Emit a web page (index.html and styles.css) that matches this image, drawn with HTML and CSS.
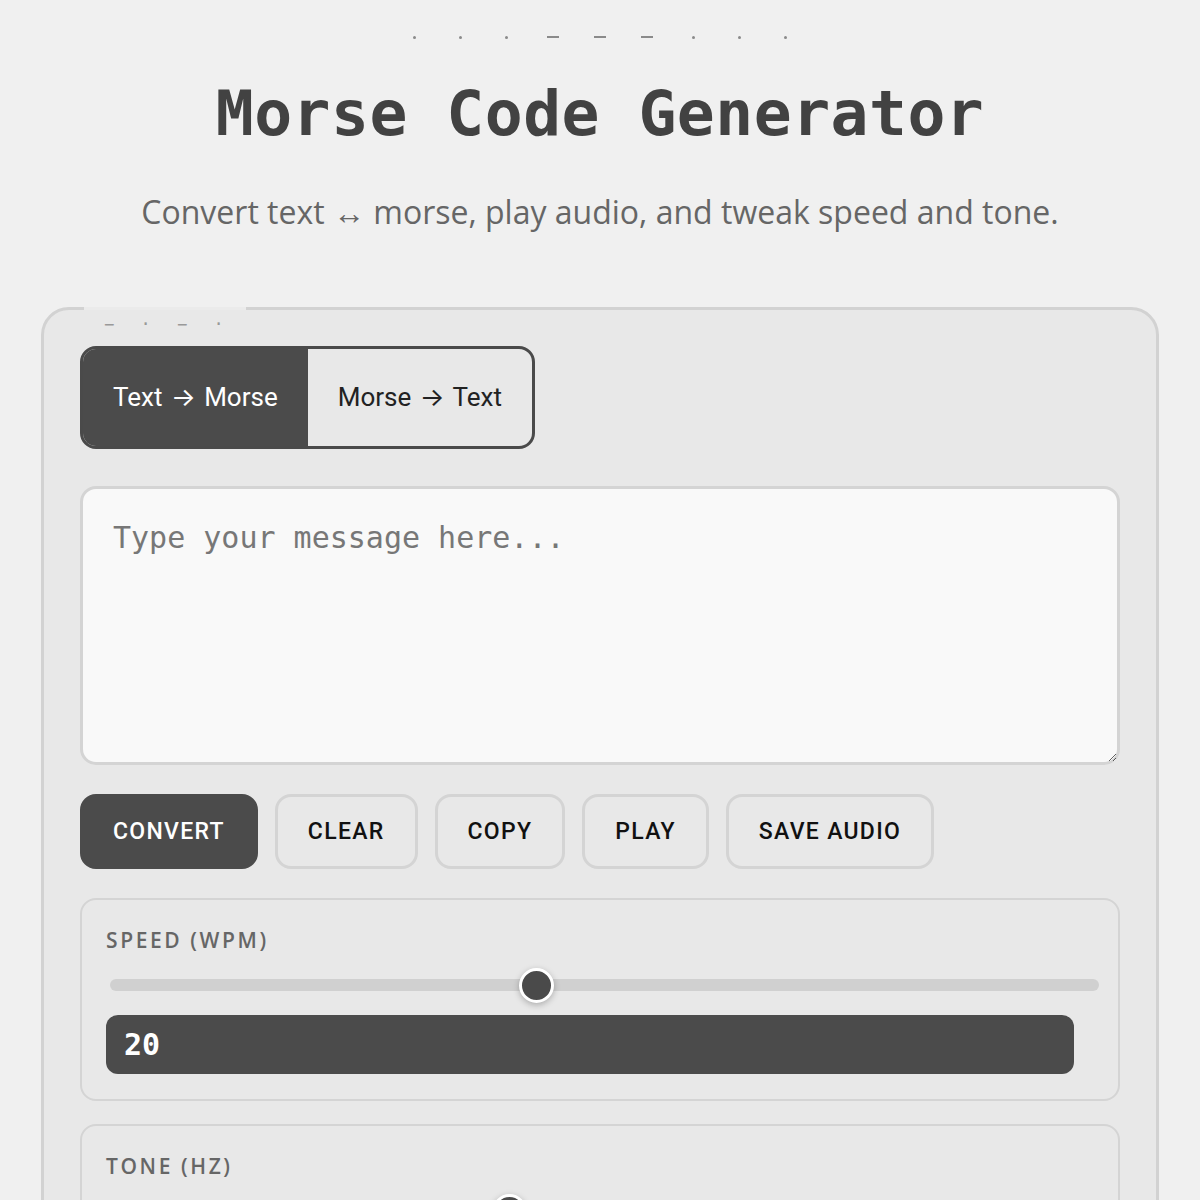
FILE: index.html
```html
<!DOCTYPE html>
<html lang="en">
<head>
    <meta charset="UTF-8">
    <meta name="viewport" content="width=device-width, initial-scale=1.0">
    <title>Morse Code Generator</title>
    <link rel="stylesheet" href="styles.css">
</head>
<body>
    <div id="page">
        <div class="signal">
            <i class="dot"></i><i class="dot"></i><i class="dot"></i>
            <i class="dash"></i><i class="dash"></i><i class="dash"></i>
            <i class="dot"></i><i class="dot"></i><i class="dot"></i>
        </div>
        <h1 class="title">Morse Code Generator</h1>
        <p class="sub">Convert text ↔ morse, play audio, and tweak speed and tone.</p>

        <div class="card">
            <span class="tag">&minus; &middot; &minus; &middot;</span>
            <div class="mode">
                <div class="mode-btn on">Text → Morse</div>
                <div class="mode-btn">Morse → Text</div>
            </div>
            <textarea class="input" placeholder="Type your message here..."></textarea>
            <div class="actions">
                <button class="btn main">Convert</button>
                <button class="btn">Clear</button>
                <button class="btn">Copy</button>
                <button class="btn">Play</button>
                <button class="btn">Save Audio</button>
            </div>
            <div class="panel">
                <label class="label">Speed (WPM)</label>
                <input class="range" type="range" min="5" max="40" value="20">
                <div class="value">20</div>
            </div>
            <div class="panel">
                <label class="label">Tone (Hz)</label>
                <input class="range" type="range" min="200" max="1200" value="600">
                <div class="value">600</div>
            </div>
        </div>
    </div>
</body>
</html>
```

FILE: styles.css
```css
body,p,h1{
    margin:0;
}
body{
    background:#f0f0f0;
    font-family:"Open Sans","Noto Sans",sans-serif;
}
/* 页面 */
#page{
    padding:0 41px;
}
.signal{
    display:flex;
    justify-content:center;
    align-items:center;
    gap:43px;
    height:74px;
}
.signal i{
    display:block;
    background:#8a8a8a;
}
.signal .dot{
    width:3px;
    height:3px;
    border-radius:50%;
}
.signal .dash{
    width:12px;
    height:2px;
    margin:0 -4px;
}
.title{
    font-family:"DejaVu Sans Mono","Liberation Mono",monospace;
    font-weight:bold;
    font-size:63px;
    line-height:80px;
    letter-spacing:0.5px;
    text-align:center;
    color:#424242;
}
.sub{
    margin-top:37px;
    text-align:center;
    font-size:32px;
    line-height:42px;
    color:#666;
}
/* 卡片 */
.card{
    position:relative;
    margin-top:74px;
    padding:36px 36px 0;
    height:900px;
    background:#e8e8e8;
    border:3px solid #d2d2d2;
    border-radius:28px;
}
.tag{
    position:absolute;
    left:40px;
    top:-3px;
    width:142px;
    padding-left:20px;
    border-top:3px solid #ebebeb;
    font-family:"DejaVu Sans Mono",monospace;
    font-size:17px;
    line-height:28px;
    letter-spacing:8px;
    color:#999;
}
.mode{
    display:inline-flex;
    border:3px solid #4a4a4a;
    border-radius:16px;
    overflow:hidden;
}
.mode-btn{
    padding:0 30px;
    height:97px;
    line-height:97px;
    font-family:Roboto,Inter,sans-serif;
    font-size:26px;
    word-spacing:2px;
    color:#222;
}
.mode-btn.on{
    background:#4b4b4b;
    color:#fff;
}
.input{
    display:block;
    box-sizing:border-box;
    width:100%;
    height:279px;
    margin-top:37px;
    padding:31px 30px;
    background:#f9f9f9;
    border:3px solid #d4d4d4;
    border-radius:16px;
    font-family:"DejaVu Sans Mono",monospace;
    font-size:30px;
    color:#222;
    outline:none;
}
.input::placeholder{
    color:#777;
}
.actions{
    display:flex;
    gap:17px;
    margin-top:29px;
}
.btn{
    height:75px;
    padding:0 30px;
    background:#e8e8e8;
    border:3px solid #d4d4d4;
    border-radius:16px;
    font-family:Roboto,Inter,sans-serif;
    font-weight:500;
    font-size:23px;
    letter-spacing:1.3px;
    text-transform:uppercase;
    color:#111;
}
.btn.main{
    background:#4b4b4b;
    border-color:#4b4b4b;
    color:#fff;
}
.panel{
    margin-top:29px;
    padding:24px 24px 25px;
    border:2px solid #d4d4d4;
    border-radius:16px;
}
.panel+.panel{
    margin-top:23px;
}
.label{
    display:block;
    font-weight:600;
    font-size:21px;
    line-height:32px;
    letter-spacing:2.6px;
    text-transform:uppercase;
    color:#666;
}
.range{
    display:block;
    -webkit-appearance:none;
    appearance:none;
    width:calc(100% + 1px);
    height:12px;
    margin:23px 0 0 4px;
    background:#d0d0d0;
    border-radius:6px;
    outline:none;
}
.range::-webkit-slider-thumb{
    -webkit-appearance:none;
    width:35px;
    height:35px;
    border-radius:50%;
    background:#4a4a4a;
    border:3px solid #fff;
    box-sizing:border-box;
    box-shadow:0 2px 6px rgba(0,0,0,.25);
}
.value{
    box-sizing:border-box;
    width:calc(100% - 20px);
    height:59px;
    margin-top:24px;
    padding-left:18px;
    background:#4b4b4b;
    border-radius:12px;
    font-family:"DejaVu Sans Mono",monospace;
    font-weight:bold;
    font-size:30px;
    line-height:59px;
    color:#fff;
}
```
